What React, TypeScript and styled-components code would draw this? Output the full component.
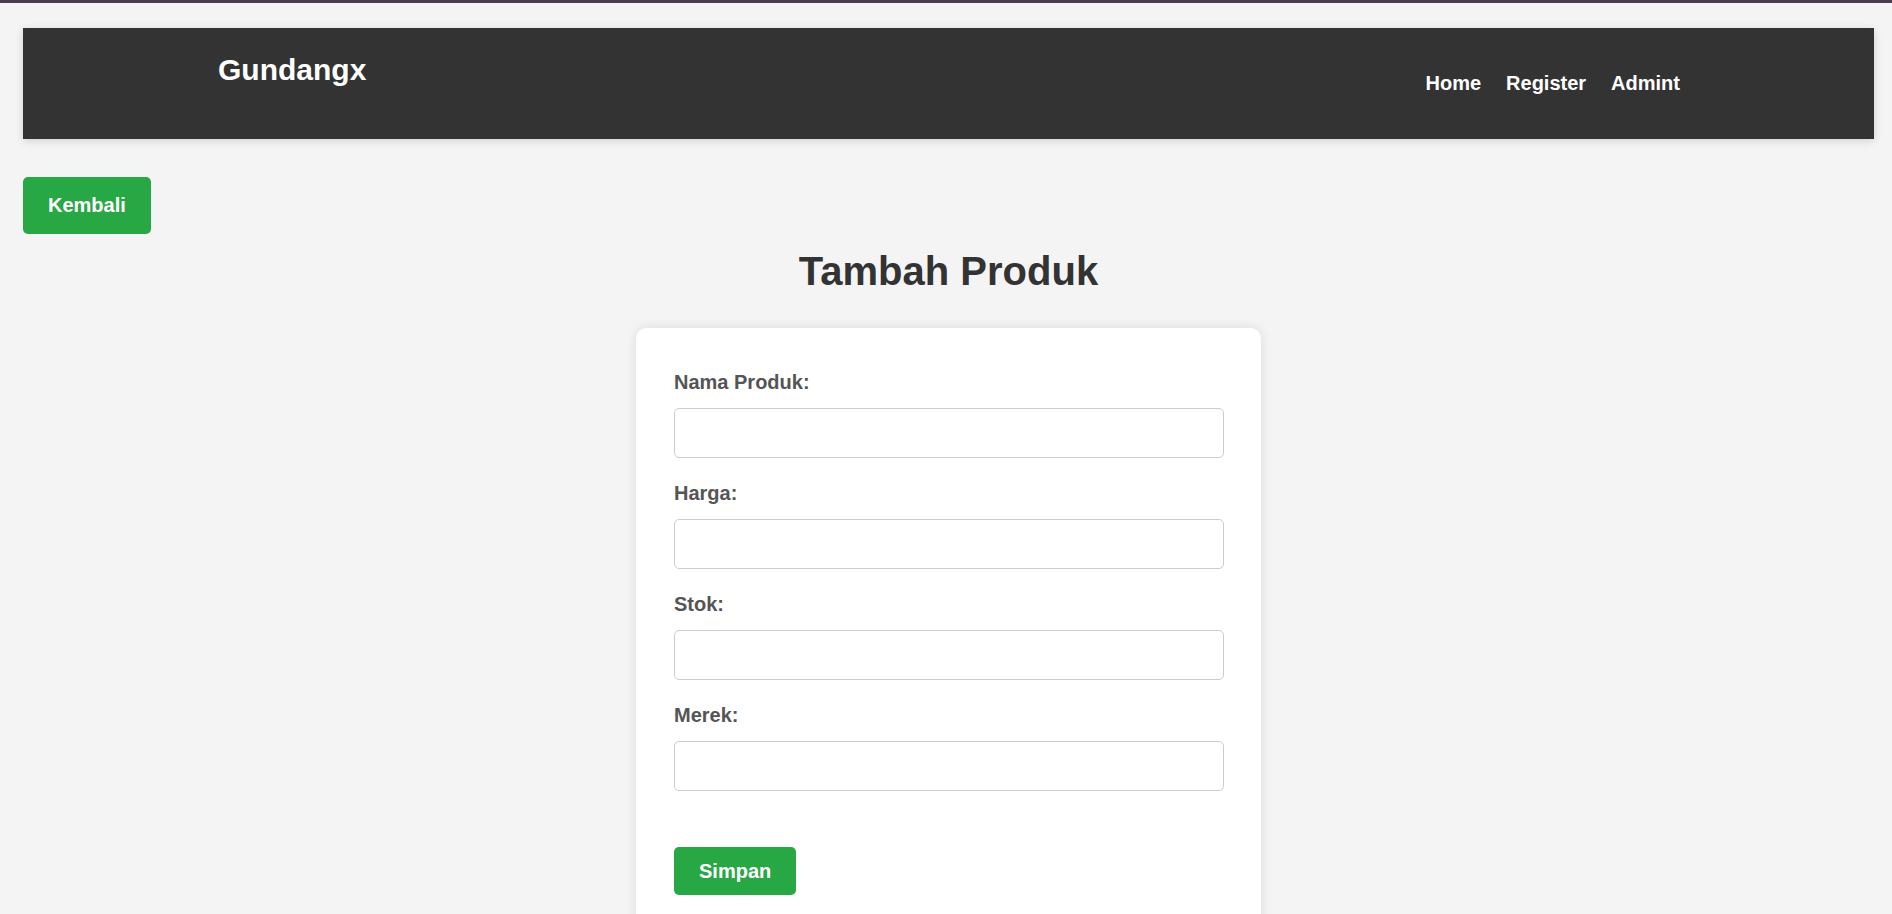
import React from "react";
import styled, { createGlobalStyle } from "styled-components";

const GlobalStyle = createGlobalStyle`
    html, body {
        margin: 0;
        padding: 0;
        overflow: hidden;
        background: #f4f4f4;
        font-family: "Liberation Sans", Arial, Helvetica, sans-serif;
    }
    * {
        box-sizing: border-box;
    }
`;

const fields = ["Nama Produk:", "Harga:", "Stok:", "Merek:"];

const App = () => {
    return (
        <StyledPage>
            <GlobalStyle />
            <StyledHeader>
                <StyledLogo>Gundangx</StyledLogo>
                <StyledNav>
                    <StyledNavLink href="#">Home</StyledNavLink>
                    <StyledNavLink href="#">Register</StyledNavLink>
                    <StyledNavLink href="#">Admint</StyledNavLink>
                </StyledNav>
            </StyledHeader>

            <StyledBackButton type="button">Kembali</StyledBackButton>

            <StyledTitle>Tambah Produk</StyledTitle>

            <StyledCard>
                {fields.map((label) => (
                    <StyledFieldGroup key={label}>
                        <StyledLabel>{label}</StyledLabel>
                        <StyledInput type="text" />
                    </StyledFieldGroup>
                ))}
                <StyledSubmitButton type="button">Simpan</StyledSubmitButton>
            </StyledCard>
        </StyledPage>
    );
};

const StyledPage = styled.div`
    min-height: 914px;
    border-top: 3px solid #4b3d50;
    padding: 25px 18px 0 23px;
`;

const StyledHeader = styled.header`
    display: flex;
    justify-content: space-between;
    align-items: flex-start;
    height: 111px;
    padding: 25px 194px 0 195px;
    background: #333333;
    box-shadow: 0 2px 8px rgba(0, 0, 0, 0.14);
`;

const StyledLogo = styled.h1`
    margin: 0;
    font-size: 30px;
    font-weight: 700;
    line-height: normal;
    color: #ffffff;
`;

const StyledNav = styled.nav`
    display: flex;
    gap: 25px;
    margin-top: 18.5px;
`;

const StyledNavLink = styled.a`
    font-size: 20px;
    font-weight: 700;
    line-height: normal;
    color: #ffffff;
    text-decoration: none;
`;

const StyledGreenButton = styled.button`
    display: inline-block;
    border: none;
    border-radius: 5px;
    background: #28a745;
    color: #ffffff;
    font-family: inherit;
    font-size: 20px;
    font-weight: 700;
    line-height: 23px;
    padding: 0 25px;
    cursor: pointer;
`;

const StyledBackButton = styled(StyledGreenButton)`
    display: block;
    height: 57px;
    margin-top: 38px;
`;

const StyledTitle = styled.h2`
    margin: 14px 0 34px;
    text-align: center;
    font-size: 40px;
    font-weight: 700;
    line-height: 46px;
    color: #333333;
`;

const StyledCard = styled.div`
    width: 625px;
    margin: 0 auto;
    padding: 43px 37px 40px 38px;
    background: #ffffff;
    border-radius: 10px;
    box-shadow: 0 0 12px rgba(0, 0, 0, 0.1);
`;

const StyledFieldGroup = styled.div`
    display: flex;
    flex-direction: column;
    gap: 14px;
    margin-bottom: 24px;
`;

const StyledLabel = styled.label`
    font-size: 20px;
    font-weight: 700;
    line-height: 23px;
    color: #555555;
`;

const StyledInput = styled.input`
    width: 100%;
    height: 50px;
    padding: 0 12px;
    border: 1px solid #cccccc;
    border-radius: 5px;
    background: #ffffff;
    font-family: inherit;
    font-size: 18px;
    outline: none;
`;

const StyledSubmitButton = styled(StyledGreenButton)`
    height: 48px;
    margin-top: 32px;
`;

export default App;
